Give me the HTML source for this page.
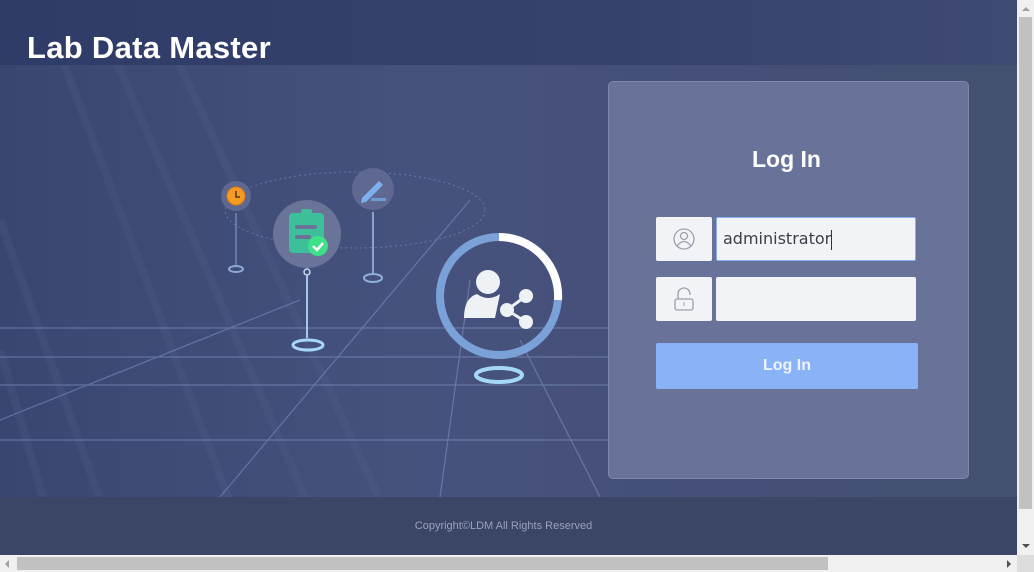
<!DOCTYPE html>
<html><head><meta charset="utf-8"><style>
*{margin:0;padding:0;box-sizing:border-box}
html,body{width:1034px;height:572px;overflow:hidden;font-family:"Liberation Sans",sans-serif}
#vp{position:absolute;left:0;top:0;width:1017px;height:555px;overflow:hidden;background:linear-gradient(90deg,#3a4672 0%,#46527e 40%,#454f78 70%,#44506f 100%)}
.hdr{position:absolute;left:0;top:0;width:100%;height:65px;background:linear-gradient(90deg,#2f3c68,#36426c 60%,#3f4a72)}
.hdr h1{position:absolute;left:27px;top:30px;color:#fff;font-size:31px;font-weight:bold;letter-spacing:.3px}
.foot{position:absolute;left:0;top:497px;width:100%;height:58px;background:#3b4565;color:#9aa2bb;font-size:11px;text-align:center;line-height:58px;padding-right:10px}
.card{position:absolute;left:608px;top:81px;width:361px;height:398px;background:#69739a;border:1px solid #7e88ac;border-radius:5px}
.card h2{position:absolute;top:64px;width:100%;text-align:center;color:#fff;font-size:23px;font-weight:bold;padding-right:4px}
.ib{position:absolute;left:47px;width:56px;height:44px;background:#f2f3f7;border-radius:2px}
.inp{position:absolute;left:107px;width:200px;height:44px;background:#f2f3f7;border-radius:2px}
.btn{position:absolute;left:47px;top:261px;width:262px;height:46px;background:#89b3f6;border-radius:2px;color:#eef3fd;font-weight:bold;font-size:16px;text-align:center;line-height:46px}
#vs{position:absolute;left:1017px;top:0;width:17px;height:555px;background:#f0f0f0}
#hs{position:absolute;left:0;top:555px;width:1034px;height:17px;background:#f0f0f0}
</style></head><body>
<div id="vp">
<svg width="1017" height="555" style="position:absolute;left:0;top:0">
<g stroke="#5a6592" stroke-width="8" opacity=".2" fill="none">
<path d="M40 0 L250 555"/><path d="M90 0 L330 555"/><path d="M150 0 L380 500"/><path d="M0 220 L120 555"/><path d="M0 350 L60 555"/>
</g>
<g stroke="#8fa3d6" stroke-width="1.2" opacity=".45" fill="none">
<path d="M0 328 H620"/><path d="M0 357 H620"/><path d="M0 385 H620"/><path d="M0 440 H620"/>
<path d="M470 200 L220 497"/><path d="M470 280 L440 497"/><path d="M520 340 L600 497"/><path d="M300 300 L0 420"/>
</g>
<ellipse cx="355" cy="210" rx="130" ry="38" fill="none" stroke="#9bb0e0" stroke-dasharray="2 3" opacity=".4"/>
<circle cx="236" cy="196" r="15" fill="#5e6890"/>
<circle cx="236" cy="196" r="9" fill="#f59a23" stroke="#d97a10"/>
<path d="M236 191v6h4" stroke="#4a3a20" stroke-width="1.5" fill="none"/>
<line x1="236" y1="213" x2="236" y2="266" stroke="#8aa4d0"/>
<ellipse cx="236" cy="269" rx="7" ry="3" fill="none" stroke="#8fa9d4" stroke-width="2"/>
<circle cx="373" cy="189" r="21" fill="#5e6890"/>
<path d="M362 198 L379 181 L383 185 L366 202 L361 203Z" fill="#7fb0ee"/>
<rect x="371" y="198" width="15" height="3" fill="#6e9bd8"/>
<line x1="373" y1="212" x2="373" y2="275" stroke="#8aa4d0" stroke-width="2"/>
<ellipse cx="373" cy="278" rx="9" ry="4" fill="none" stroke="#8fb0d8" stroke-width="2"/>
<circle cx="307" cy="234" r="34" fill="#6a7398"/>
<rect x="289" y="213" width="35" height="40" rx="4" fill="#3dbf9a"/>
<rect x="301" y="209" width="11" height="8" rx="2" fill="#3dbf9a"/>
<rect x="295" y="225" width="22" height="4" rx="2" fill="#6a7398"/>
<rect x="295" y="235" width="16" height="4" rx="2" fill="#6a7398"/>
<circle cx="318" cy="246" r="10" fill="#3ee08a"/>
<path d="M313 246l4 4 6-7" stroke="#fff" stroke-width="2.5" fill="none"/>
<circle cx="307" cy="272" r="3" fill="none" stroke="#c8d8f0" stroke-width="1.5"/>
<line x1="307" y1="275" x2="307" y2="338" stroke="#a8c4e8" stroke-width="2"/>
<ellipse cx="308" cy="345" rx="15" ry="5" fill="none" stroke="#a5d8f8" stroke-width="3"/>
<circle cx="499" cy="296" r="59" fill="none" stroke="#7aa2d8" stroke-width="8"/>
<path d="M499 237 A59 59 0 0 1 558 300" fill="none" stroke="#fff" stroke-width="8"/>
<circle cx="488" cy="282" r="12" fill="#eef2f5"/>
<path d="M464 318 Q464 298 477 294 Q488 302 500 294 L495 318Z" fill="#eef2f5"/>
<g fill="#eef2f5"><circle cx="526" cy="296" r="7"/><circle cx="507" cy="310" r="7"/><circle cx="526" cy="322" r="7"/></g>
<path d="M526 296 L507 310 L526 322" stroke="#eef2f5" stroke-width="3" fill="none"/>
<ellipse cx="499" cy="375" rx="23" ry="7" fill="none" stroke="#a5d8f8" stroke-width="4"/>
</svg>
<div class="hdr"><h1>Lab Data Master</h1></div>
<div class="card">
<h2>Log In</h2>
<div class="ib" style="top:135px"><svg width="56" height="44"><circle cx="28" cy="22" r="10" fill="none" stroke="#9aa0ae" stroke-width="1.3"/><circle cx="28" cy="19" r="3.5" fill="none" stroke="#9aa0ae" stroke-width="1.3"/><path d="M21 29 Q28 20 35 29" fill="none" stroke="#9aa0ae" stroke-width="1.3"/></svg></div>
<div class="inp" style="top:135px;border:1px solid #86b0f4;font-size:16px;color:#3b3f4a;line-height:42px;padding-left:6px;font-family:'DejaVu Sans','Liberation Sans',sans-serif">administrator<span style="display:inline-block;width:1px;height:20px;background:#333;vertical-align:middle"></span></div>
<div class="ib" style="top:195px"><svg width="56" height="44"><rect x="19" y="22" width="18" height="11" rx="2" fill="none" stroke="#9aa0ae" stroke-width="1.3"/><path d="M22 22 V17 A6 6 0 0 1 34 17 V18" fill="none" stroke="#9aa0ae" stroke-width="1.3"/><path d="M28 25v4" stroke="#9aa0ae"/></svg></div>
<div class="inp" style="top:195px"></div>
<div class="btn">Log In</div>
</div>
<div class="foot">Copyright©LDM All Rights Reserved</div>
</div>
<div id="vs"><div style="position:absolute;left:5px;top:7px;border:4px solid transparent;border-bottom:4px solid #a0a0a0;border-top:none;width:0"></div><div style="position:absolute;left:2px;top:17px;width:13px;height:492px;background:#c1c1c1"></div><div style="position:absolute;left:5px;top:544px;border:4px solid transparent;border-top:4px solid #505050;border-bottom:none;width:0"></div></div>
<div id="hs"><div style="position:absolute;left:5px;top:5px;border:4px solid transparent;border-right:4px solid #a0a0a0;border-left:none;height:0"></div><div style="position:absolute;left:17px;top:2px;width:811px;height:13px;background:#c1c1c1"></div><div style="position:absolute;left:1007px;top:5px;border:4px solid transparent;border-left:4px solid #505050;border-right:none;height:0"></div><div style="position:absolute;left:1017px;top:0;width:17px;height:17px;background:#dcdcdc"></div></div>
</body></html>
